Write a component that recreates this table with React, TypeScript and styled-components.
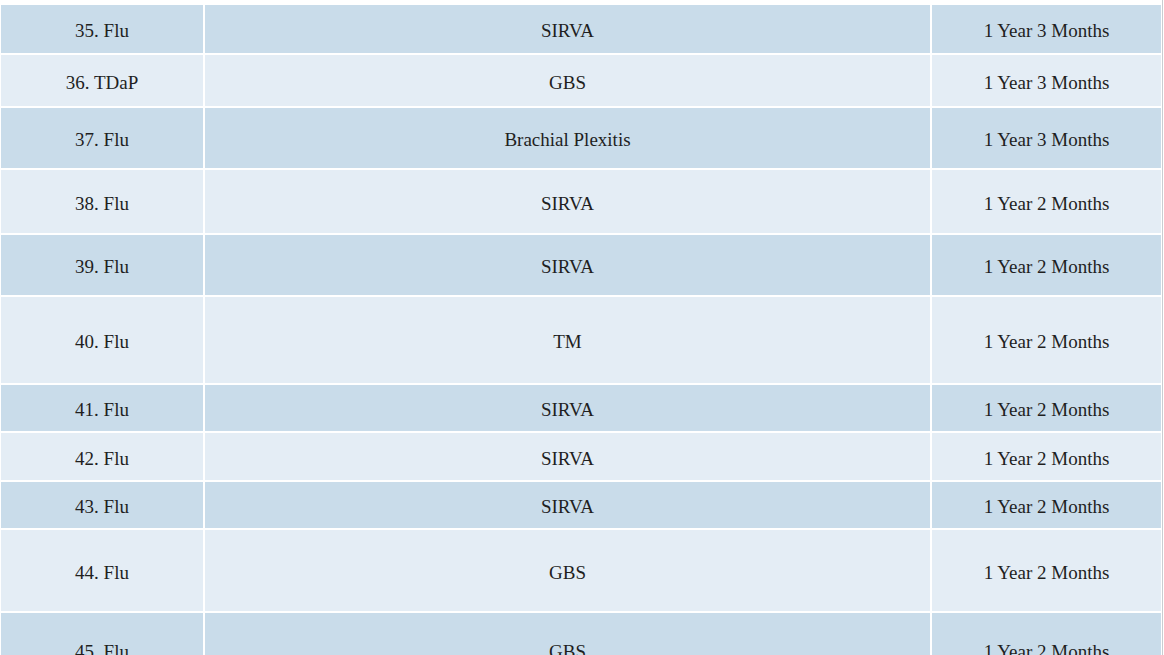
import styled, { createGlobalStyle } from "styled-components";

const GlobalStyle = createGlobalStyle`
  html, body {
    margin: 0;
    padding: 0;
    background: #ffffff;
    overflow: hidden;
  }
`;

const Page = styled.div`
  width: 1162px;
  height: 655px;
  overflow: hidden;
  border-right: 1px solid #c9cdd1;
  background: #ffffff;
`;

const Table = styled.div`
  display: flex;
  flex-direction: column;
  gap: 2px;
  padding: 5px 0 0 1px;
`;

const Row = styled.div<{ $height: number; $dark: boolean }>`
  display: grid;
  grid-template-columns: 202px 725px 229px;
  gap: 2px;
  height: ${(p) => p.$height}px;
  flex-shrink: 0;

  & > div {
    background-color: ${(p) => (p.$dark ? "#c9dcea" : "#e4edf5")};
  }
`;

const Cell = styled.div`
  display: flex;
  align-items: center;
  justify-content: center;
  padding-top: 4px;
  box-sizing: border-box;
  font-family: "Liberation Serif", "Times New Roman", serif;
  font-size: 19px;
  color: #1f1f1f;
  white-space: nowrap;
`;

type Entry = {
  vaccine: string;
  injury: string;
  time: string;
  height: number;
};

const rows: Entry[] = [
  { vaccine: "35. Flu", injury: "SIRVA", time: "1 Year 3 Months", height: 48 },
  { vaccine: "36. TDaP", injury: "GBS", time: "1 Year 3 Months", height: 51 },
  { vaccine: "37. Flu", injury: "Brachial Plexitis", time: "1 Year 3 Months", height: 60 },
  { vaccine: "38. Flu", injury: "SIRVA", time: "1 Year 2 Months", height: 63 },
  { vaccine: "39. Flu", injury: "SIRVA", time: "1 Year 2 Months", height: 60 },
  { vaccine: "40. Flu", injury: "TM", time: "1 Year 2 Months", height: 86 },
  { vaccine: "41. Flu", injury: "SIRVA", time: "1 Year 2 Months", height: 46 },
  { vaccine: "42. Flu", injury: "SIRVA", time: "1 Year 2 Months", height: 47 },
  { vaccine: "43. Flu", injury: "SIRVA", time: "1 Year 2 Months", height: 46 },
  { vaccine: "44. Flu", injury: "GBS", time: "1 Year 2 Months", height: 81 },
  { vaccine: "45. Flu", injury: "GBS", time: "1 Year 2 Months", height: 74 },
];

export default function App() {
  return (
    <>
      <GlobalStyle />
      <Page>
        <Table>
          {rows.map((r, i) => (
            <Row key={r.vaccine} $height={r.height} $dark={i % 2 === 0}>
              <Cell>{r.vaccine}</Cell>
              <Cell>{r.injury}</Cell>
              <Cell>{r.time}</Cell>
            </Row>
          ))}
        </Table>
      </Page>
    </>
  );
}
